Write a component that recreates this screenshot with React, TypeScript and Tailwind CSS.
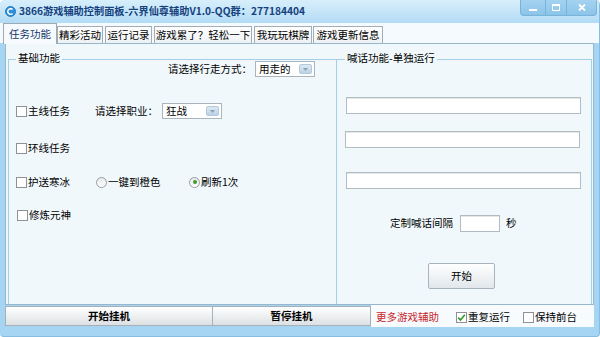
import React from 'react'

function CheckBox({ checked = false }: { checked?: boolean }) {
  return (
    <span className="w-[11px] h-[11px] shrink-0 border border-[#8e9296] bg-white flex items-center justify-center">
      {checked && (
        <svg width="9" height="9" viewBox="0 0 9 9">
          <path d="M1.2 4.6 L3.5 7 L7.8 1.8" fill="none" stroke="#2e9a28" strokeWidth="1.6" />
        </svg>
      )}
    </span>
  )
}

function Radio({ checked = false }: { checked?: boolean }) {
  return (
    <span className="w-[11px] h-[11px] shrink-0 rounded-full border border-[#9a9ea2] bg-gradient-to-b from-[#e6e8ea] to-white flex items-center justify-center">
      {checked && <span className="w-[4px] h-[4px] rounded-full bg-[#3b9b2c]" />}
    </span>
  )
}

function Check({ label, checked, width }: { label: string; checked?: boolean; width?: string }) {
  return (
    <div className={`flex items-center gap-[1px] ${width ?? ''}`}>
      <CheckBox checked={checked} />
      <span>{label}</span>
    </div>
  )
}

function Select({ value }: { value: string }) {
  return (
    <div className="w-[60px] h-[16px] border border-[#a9b4bc] bg-white flex items-center justify-between pl-[3px] pr-[2px]">
      <span className="leading-none">{value}</span>
      <span className="w-[13px] h-[10px] rounded-[2px] bg-gradient-to-b from-[#dde9f3] to-[#bcd2e4] border border-[#b3c8da] flex items-center justify-center">
        <svg width="5" height="3" viewBox="0 0 5 3">
          <path d="M0 0 L5 0 L2.5 3 Z" fill="#8aa3b8" />
        </svg>
      </span>
    </div>
  )
}

function TextBox({ className }: { className: string }) {
  return <div className={`border border-[#b1bcc3] bg-white shadow-[inset_0_1px_0_#e4e8eb] ${className}`} />
}

const tabs = [
  { label: '精彩活动', cls: 'w-[46px] ml-0' },
  { label: '运行记录', cls: 'w-[47px] ml-[2px]' },
  { label: '游戏累了？轻松一下', cls: 'w-[98px] ml-[2px]' },
  { label: '我玩玩棋牌', cls: 'w-[58px] ml-[2px]' },
  { label: '游戏更新信息', cls: 'w-[70px] ml-[1px]' },
]

export default function App() {
  return (
    <div className="w-[600px] h-[337px] flex flex-col bg-[#a6d5f3] rounded-t-[5px] rounded-b-[4px] border-b border-r border-[#86bde0] overflow-hidden font-['Noto_Sans_CJK_SC',sans-serif] text-[10.5px] text-black leading-none">
      {/* title bar */}
      <div className="h-[23px] shrink-0 flex items-start bg-gradient-to-b from-[#d8effb] to-[#b2dbf5]">
        <div className="h-[23px] flex items-center pl-[5px] gap-[3px]">
          <svg width="11" height="11" viewBox="0 0 11 11">
            <circle cx="5.5" cy="5.5" r="5" fill="#2a8fdc" stroke="#1b6db3" strokeWidth="0.8" />
            <path d="M7.6 3.6 A2.8 2.8 0 1 0 7.6 7.4" fill="none" stroke="#ffffff" strokeWidth="1.5" />
          </svg>
          <span className="font-bold text-[10.2px] text-[#15427d]">
            3866游戏辅助控制面板-六界仙尊辅助V1.0-QQ群：277184404
          </span>
        </div>
        <div className="ml-auto mr-[2px] flex h-[16px] rounded-b-[4px] overflow-hidden border border-t-0 border-[#77b3db] bg-gradient-to-b from-[#a4d3f1] to-[#8cc4e8]">
          <div className="w-[25px] flex items-center justify-center border-r border-[#77b3db]">
            <span className="w-[8px] h-[2px] bg-white mt-[4px]" />
          </div>
          <div className="w-[21px] flex items-center justify-center border-r border-[#77b3db]">
            <span className="w-[8px] h-[7px] border border-white border-t-2" />
          </div>
          <div className="w-[29px] flex items-center justify-center">
            <svg width="8" height="7" viewBox="0 0 8 7">
              <path d="M1 0.5 L7 6.5 M7 0.5 L1 6.5" stroke="#ffffff" strokeWidth="1.8" />
            </svg>
          </div>
        </div>
      </div>

      {/* tabs */}
      <div className="h-[20px] shrink-0 flex items-end pl-[3px] bg-[#f4fafd]">
        <div className="w-[54px] h-[21px] mb-[-1px] relative z-10 bg-[#f7fbfd] border border-b-0 border-[#9eaab3] flex items-center justify-center text-[#13386e]">
          任务功能
        </div>
        {tabs.map((t) => (
          <div
            key={t.label}
            className={`h-[17px] border border-b-0 border-[#a3adb5] bg-gradient-to-b from-white to-[#eef1f3] flex items-center justify-center ${t.cls}`}
          >
            {t.label}
          </div>
        ))}
      </div>

      {/* main panel */}
      <div className="h-[262px] shrink-0 ml-[5px] w-[589px] border border-[#98b7cb] bg-[#f0f8fc] flex">
        {/* left group */}
        <div className="ml-[2px] mt-[15px] w-[328px] border-l border-t border-[#a3d0e6] relative flex flex-col">
          <span className="absolute top-[-7px] left-[7px] px-[2px] bg-[#f0f8fc]">基础功能</span>

          <div className="h-[20px] mt-[-1px] pl-[159px] flex items-center">
            <span className="w-[87px]">请选择行走方式：</span>
            <Select value="用走的" />
          </div>

          <div className="h-[20px] mt-[22px] pl-[7px] flex items-center">
            <Check label="主线任务" width="w-[79px]" />
            <span className="w-[67px]">请选择职业：</span>
            <Select value="狂战" />
          </div>

          <div className="h-[20px] mt-[17px] pl-[7px] flex items-center">
            <Check label="环线任务" />
          </div>

          <div className="h-[20px] mt-[14px] pl-[7px] flex items-center">
            <Check label="护送寒冰" width="w-[80px]" />
            <div className="w-[93px] flex items-center gap-[1px]">
              <Radio />
              <span>一键到橙色</span>
            </div>
            <div className="flex items-center gap-[1px]">
              <Radio checked />
              <span>刷新1次</span>
            </div>
          </div>

          <div className="h-[20px] mt-[13px] pl-[8px] flex items-center">
            <Check label="修炼元神" />
          </div>
        </div>

        {/* right group */}
        <div className="mt-[15px] w-[256px] border-l border-t border-r border-[#a3d0e6] relative flex flex-col">
          <span className="absolute top-[-7px] left-[8px] px-[2px] bg-[#f0f8fc]">喊话功能-单独运行</span>

          <TextBox className="mt-[37px] ml-[9px] w-[235px] h-[17px]" />
          <TextBox className="mt-[17px] ml-[8px] w-[235px] h-[17px]" />
          <TextBox className="mt-[24px] ml-[9px] w-[235px] h-[17px]" />

          <div className="mt-[26px] pl-[53px] h-[17px] flex items-center">
            <span className="w-[70px]">定制喊话间隔</span>
            <TextBox className="w-[40px] h-[17px]" />
            <span className="ml-[6px]">秒</span>
          </div>

          <button className="mt-[31px] ml-[91px] w-[67px] h-[26px] rounded-[2px] border border-[#a7b4bd] bg-gradient-to-b from-white to-[#e1e7eb] flex items-center justify-center">
            开始
          </button>
        </div>
      </div>

      {/* bottom bar */}
      <div className="h-[22px] shrink-0 ml-[5px] w-[589px] flex items-start">
        <button className="mt-[1px] w-[208px] h-[20px] border border-[#a5b0b8] bg-gradient-to-b from-white to-[#dde1e4] font-bold flex items-center justify-center">
          开始挂机
        </button>
        <button className="mt-[1px] w-[158px] h-[20px] border border-l-0 border-[#a5b0b8] bg-gradient-to-b from-white to-[#dde1e4] font-bold flex items-center justify-center">
          暂停挂机
        </button>
        <div className="flex-1 h-[22px] bg-[#f7fbfd] flex items-center pl-[5px] pt-[2px]">
          <span className="w-[80px] text-[#c8252b]">更多游戏辅助</span>
          <Check label="重复运行" checked width="w-[67px]" />
          <Check label="保持前台" />
        </div>
      </div>
    </div>
  )
}
